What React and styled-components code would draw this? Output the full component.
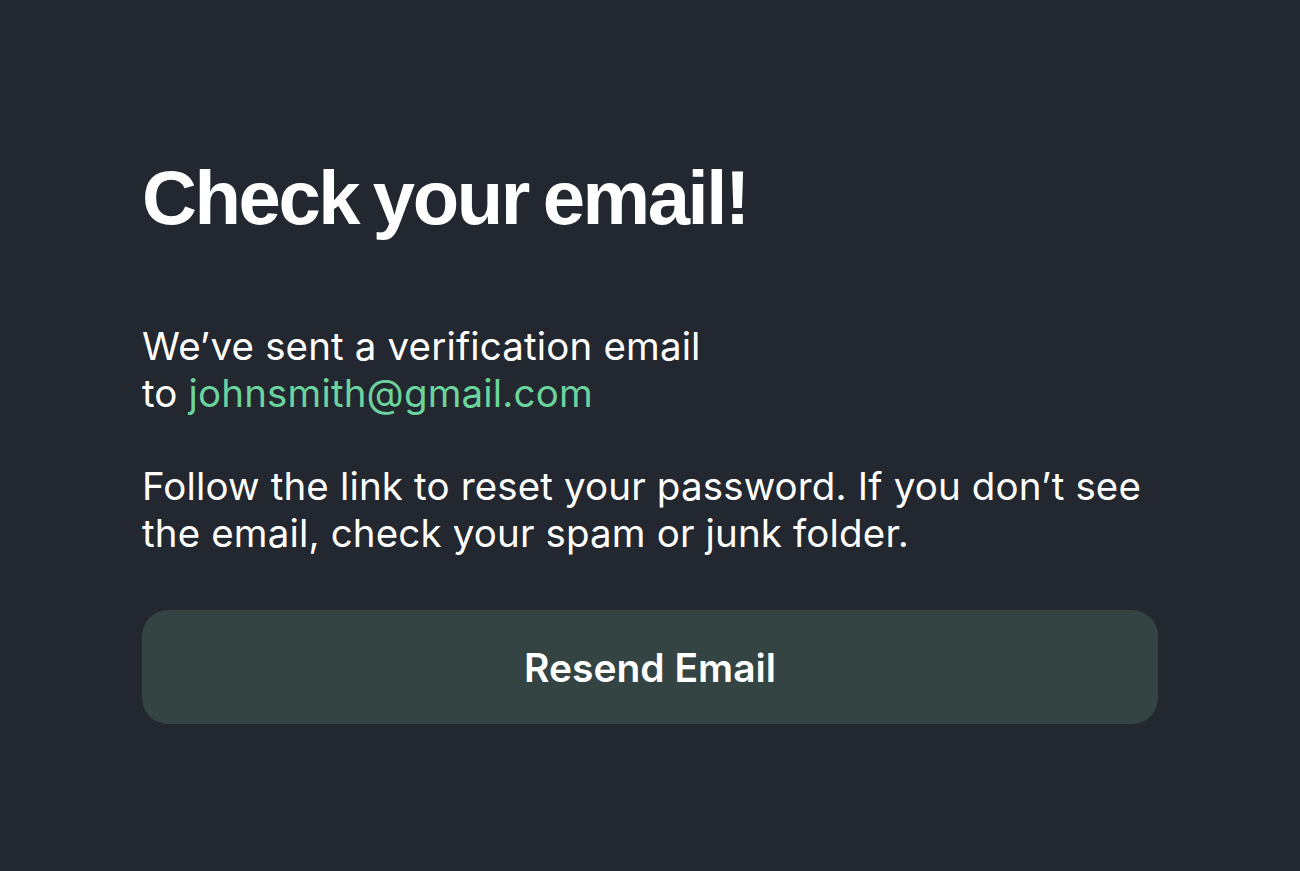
import React from "react";
import styled, { createGlobalStyle } from "styled-components";

const GlobalStyle = createGlobalStyle`
  html, body {
    margin: 0;
    padding: 0;
    background: #23272f;
  }
  body {
    font-family: "Inter", "Noto Sans", sans-serif;
    -webkit-font-smoothing: antialiased;
  }
`;

function App() {
  return (
    <>
      <GlobalStyle />
      <Page>
        <Card>
          <Title>Check your email!</Title>
          <Text>
            We’ve sent a verification email
            <br />
            to <Email>johnsmith@gmail.com</Email>
          </Text>
          <Text>
            Follow the link to reset your password. If you don’t see the
            email, check your spam or junk folder.
          </Text>
          <ResendButton type="button">Resend Email</ResendButton>
        </Card>
      </Page>
    </>
  );
}

const Page = styled.main`
  min-height: 871px;
  box-sizing: border-box;
  background: #23272f;
  padding: 152px 142px 0;
`;

const Card = styled.div`
  display: flex;
  flex-direction: column;
  width: 1016px;
`;

const Title = styled.h1`
  margin: 0 0 79px;
  font-family: "Liberation Sans", Arial, sans-serif;
  font-weight: 700;
  font-size: 76px;
  line-height: 92px;
  letter-spacing: -2.4px;
  word-spacing: -4px;
  color: #ffffff;
`;

const Text = styled.p`
  margin: 0 0 46px;
  font-family: "Inter", sans-serif;
  font-weight: 400;
  font-size: 38.5px;
  line-height: 47px;
  letter-spacing: 0.15px;
  color: #ffffff;
  max-width: 1016px;
`;

const Email = styled.span`
  color: #6ad39e;
`;

const ResendButton = styled.button`
  margin-top: 7px;
  height: 114px;
  width: 100%;
  border: none;
  border-radius: 26px;
  background: #334442;
  color: #ffffff;
  font-family: "Inter", sans-serif;
  font-weight: 600;
  font-size: 39px;
  cursor: pointer;
`;

export default App;
